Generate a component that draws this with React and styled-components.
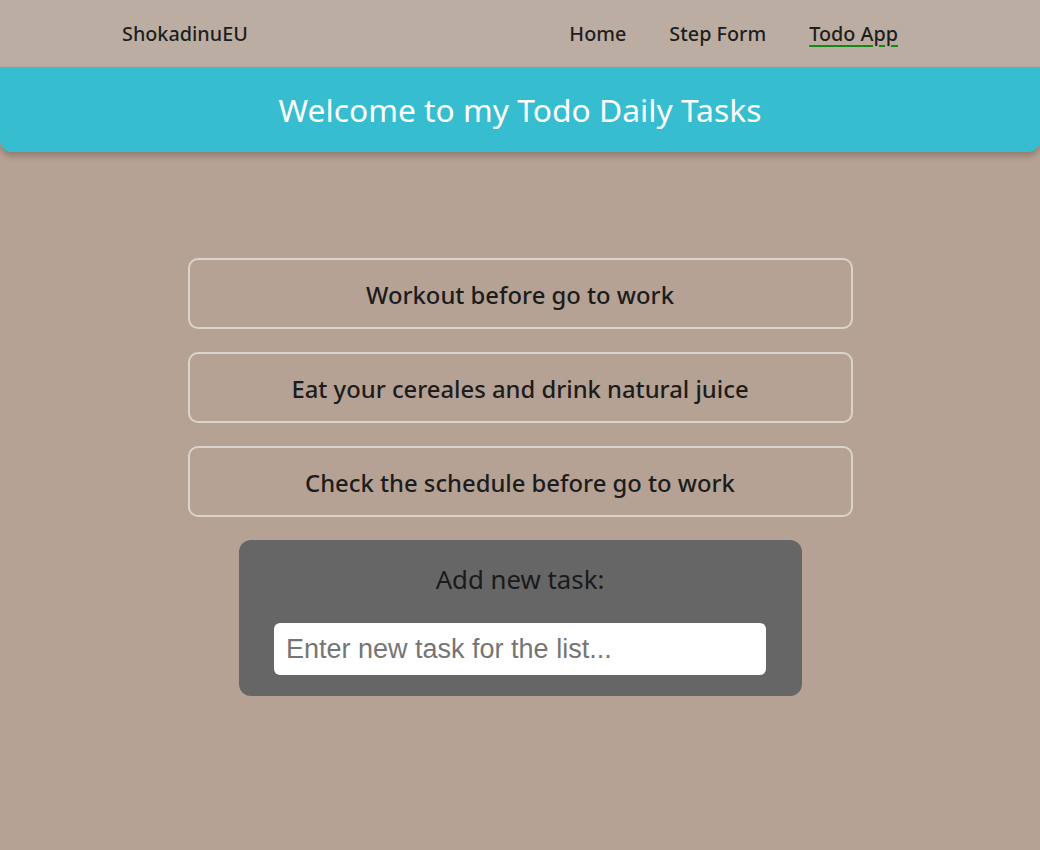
import React from "react";
import styled, { createGlobalStyle } from "styled-components";

const Global = createGlobalStyle`
  html, body { margin: 0; padding: 0; }
  body {
    background: #b5a294;
    font-family: "Noto Sans", "Open Sans", sans-serif;
    min-height: 850px;
  }
`;

const Nav = styled.nav`
  height: 67px;
  background: #bcada2;
  display: flex;
  align-items: center;
  justify-content: space-between;
  padding: 0 142px 0 122px;
`;

const Brand = styled.div`
  font-size: 19.8px;
  font-weight: 500;
  color: #1e1e1e;
`;

const Links = styled.div`
  display: flex;
  gap: 43px;
`;

const NavLink = styled.a`
  font-size: 19.8px;
  font-weight: 500;
  color: #1e1e1e;
  text-decoration: ${(p) => (p.$active ? "underline" : "none")};
  text-decoration-color: #138a13;
  text-decoration-thickness: 2px;
  text-underline-offset: 4px;
`;

const Banner = styled.header`
  height: 85px;
  background: #36bdd0;
  border-radius: 0 0 12px 12px;
  box-shadow: 0 4px 6px rgba(80, 60, 50, 0.35);
  display: flex;
  align-items: center;
  justify-content: center;
`;

const Title = styled.h1`
  margin: 0;
  font-size: 31.8px;
  font-weight: 400;
  color: #ffffff;
`;

const Main = styled.main`
  display: flex;
  flex-direction: column;
  align-items: center;
  padding-top: 106px;
  gap: 23px;
`;

const TaskCard = styled.div`
  box-sizing: border-box;
  width: 665px;
  height: 71px;
  border: 2px solid #dcd3cc;
  border-radius: 10px;
  display: flex;
  align-items: center;
  justify-content: center;
  font-size: 23.8px;
  font-weight: 500;
  color: #1c1c1c;
  padding-top: 3px;
`;

const AddBox = styled.div`
  box-sizing: border-box;
  width: 563px;
  height: 156px;
  background: #666666;
  border-radius: 12px;
  display: flex;
  flex-direction: column;
  align-items: center;
  padding-top: 22px;
`;

const AddLabel = styled.div`
  font-size: 25.8px;
  color: #1a1a1a;
  line-height: 34px;
`;

const TaskInput = styled.input`
  box-sizing: border-box;
  margin-top: 27px;
  width: 492px;
  height: 52px;
  border: none;
  border-radius: 6px;
  background: #ffffff;
  padding: 0 12px;
  font-family: "Liberation Sans", Arial, sans-serif;
  font-size: 27px;
  outline: none;
  &::placeholder { color: #757575; }
`;

const tasks = [
  "Workout before go to work",
  "Eat your cereales and drink natural juice",
  "Check the schedule before go to work",
];

export default function App() {
  return (
    <>
      <Global />
      <Nav>
        <Brand>ShokadinuEU</Brand>
        <Links>
          <NavLink>Home</NavLink>
          <NavLink>Step Form</NavLink>
          <NavLink $active>Todo App</NavLink>
        </Links>
      </Nav>
      <Banner>
        <Title>Welcome to my Todo Daily Tasks</Title>
      </Banner>
      <Main>
        {tasks.map((t) => (
          <TaskCard key={t}>{t}</TaskCard>
        ))}
        <AddBox>
          <AddLabel>Add new task:</AddLabel>
          <TaskInput placeholder="Enter new task for the list..." />
        </AddBox>
      </Main>
    </>
  );
}
